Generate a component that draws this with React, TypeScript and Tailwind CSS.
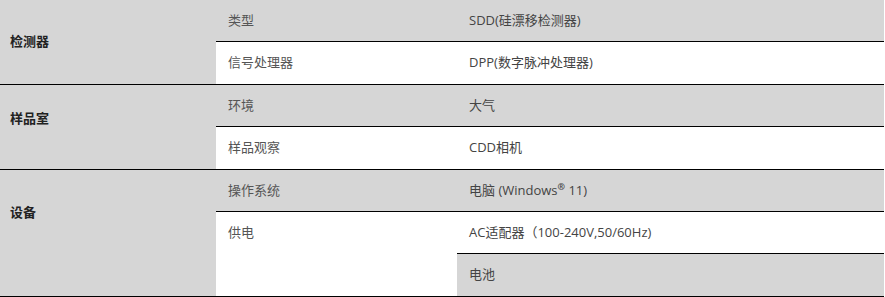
import React from "react";

const font = { fontFamily: '"Open Sans", "Noto Sans CJK SC", sans-serif' };

export default function App() {
  const b = "border-b border-black";
  const c2 = "flex items-center pl-3 text-[13px] text-[#555]";
  const c3 = "flex items-center pl-3 text-[13px] text-[#444]";
  return (
    <div className="w-[885px] h-[297px] bg-white" style={font}>
      <div className="grid w-[884px] grid-cols-[216px_241px_427px] grid-rows-[42px_43px_42px_43px_42px_42px_43px]">
        <div className={`row-span-2 col-start-1 row-start-1 bg-[#d6d6d6] ${b} pl-[10px] pt-[32px] text-[13px] font-bold text-[#222]`}>检测器</div>
        <div className={`col-start-2 row-start-1 bg-[#d6d6d6] ${b} ${c2}`}>类型</div>
        <div className={`col-start-3 row-start-1 bg-[#d6d6d6] ${b} ${c3}`}>SDD(硅漂移检测器)</div>
        <div className={`col-start-2 row-start-2 bg-white ${b} ${c2}`}>信号处理器</div>
        <div className={`col-start-3 row-start-2 bg-white ${b} ${c3}`}>DPP(数字脉冲处理器)</div>

        <div className={`row-span-2 col-start-1 row-start-3 bg-[#d6d6d6] ${b} pl-[10px] pt-[24px] text-[13px] font-bold text-[#222]`}>样品室</div>
        <div className={`col-start-2 row-start-3 bg-[#d6d6d6] ${b} ${c2}`}>环境</div>
        <div className={`col-start-3 row-start-3 bg-[#d6d6d6] ${b} ${c3}`}>大气</div>
        <div className={`col-start-2 row-start-4 bg-white ${b} ${c2}`}>样品观察</div>
        <div className={`col-start-3 row-start-4 bg-white ${b} ${c3}`}>CDD相机</div>

        <div className={`row-span-3 col-start-1 row-start-5 bg-[#d6d6d6] ${b} pl-[10px] pt-[33px] text-[13px] font-bold text-[#222]`}>设备</div>
        <div className={`col-start-2 row-start-5 bg-[#d6d6d6] ${b} ${c2}`}>操作系统</div>
        <div className={`col-start-3 row-start-5 bg-[#d6d6d6] ${b} ${c3}`}>
          <span>
            电脑 (Windows<sup className="text-[9px] font-bold">®</sup> 11)
          </span>
        </div>
        <div className={`row-span-2 col-start-2 row-start-6 bg-white ${b} pl-3 pt-[11px] text-[13px] text-[#555]`}>供电</div>
        <div className={`col-start-3 row-start-6 bg-white ${b} ${c3}`}>AC适配器（100-240V,50/60Hz)</div>
        <div className={`col-start-3 row-start-7 bg-[#d6d6d6] ${b} ${c3}`}>电池</div>
      </div>
    </div>
  );
}
